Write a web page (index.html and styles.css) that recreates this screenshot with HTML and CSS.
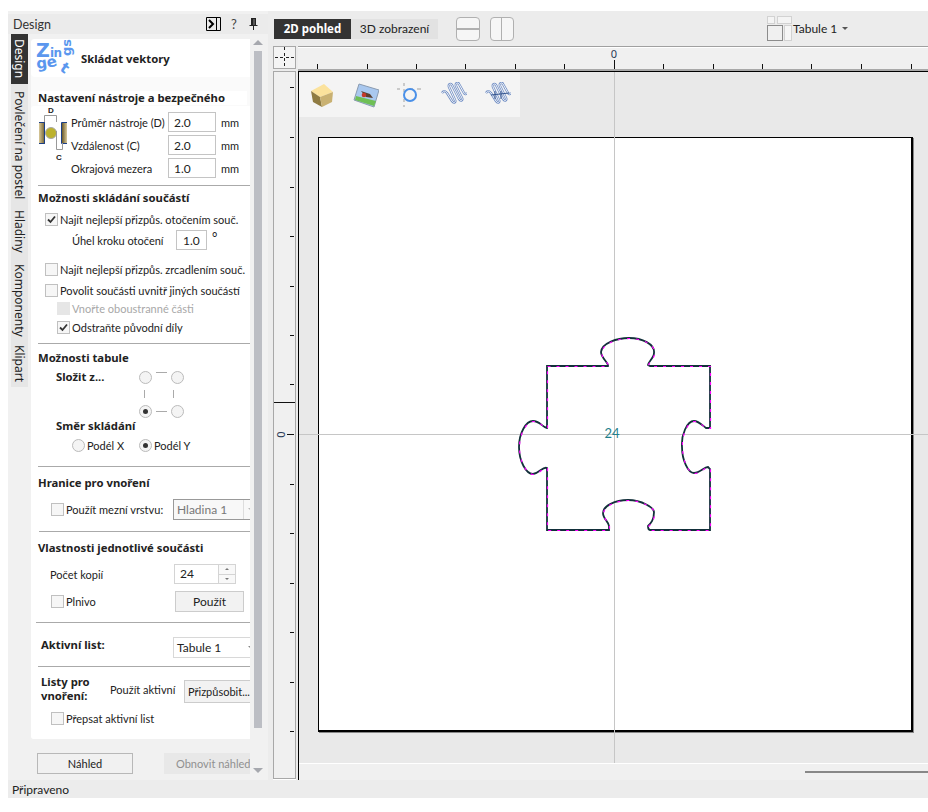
FILE: index.html
```html
<!DOCTYPE html>
<html lang="cs">
<head>
  <meta charset="UTF-8" />
  <title>Skládat vektory</title>
  <link rel="stylesheet" href="styles.css">
</head>
<body>
  <div class="app">
    <div class="main">
      <!-- left design panel -->
      <aside class="panel">
        <div class="panel-title">
          <span class="panel-name">Design</span>
          <span class="pt-dock"><svg width="15" height="14" viewBox="0 0 15 14"><path d="M.5.5h14v13H.5zM10.500 1v12" fill="none" stroke="#000"/><path d="M3 3l4 4-4 4" fill="none" stroke="#000" stroke-width="2"/></svg></span>
          <span class="pt-help">?</span>
          <span class="pt-pin"><svg width="9" height="14" viewBox="0 0 9 14"><path d="M2 1h5v7h1.500v1h-8v-1H2zM4 9h1v4H4z" fill="#222"/><path d="M5 2v6" stroke="#888"/></svg></span>
        </div>
        <div class="panel-body">
          <nav class="tabs">
            <span class="tab tab-active">Design</span>
            <span class="tab tab-bed">Povlečení na postel</span>
            <span class="tab tab-layers">Hladiny</span>
            <span class="tab tab-comp">Komponenty</span>
            <span class="tab tab-clip">Klipart</span>
          </nav>
          <div class="form-col">
            <div class="form-scroll">
              <div class="head-card">
                <svg class="logo" width="36" height="38" viewBox="0 0 36 38">
                  <g fill="#5b97ee" font-family="'DejaVu Sans', sans-serif" font-weight="700">
                    <text x="0" y="18" font-size="19">Z</text>
                    <text x="14" y="18" font-size="12">i</text>
                    <text x="17.500" y="18" font-size="12">n</text>
                    <text transform="translate(35 17) rotate(-90)" font-size="13">gs</text>
                    <text transform="translate(1 30) rotate(-8)" font-size="15">g</text>
                    <text transform="translate(12 29) rotate(-15)" font-size="15">e</text>
                    <text transform="translate(23 31) rotate(35)" font-size="15">t</text>
                  </g>
                </svg>
                <span class="head-title">Skládat vektory</span>
              </div>

              <section class="sec-tool">
                <h3 class="sec-h sec-h-white">Nastavení nástroje a bezpečného</h3>
                <div class="tool-body">
                  <svg class="tool-pic" width="30" height="44" viewBox="0 0 30 44">
                    <defs>
                      <linearGradient id="woodL" x1="0" x2="1"><stop offset="0" stop-color="#d9c99a"/><stop offset="1" stop-color="#6b5a2a"/></linearGradient>
                      <linearGradient id="woodR" x1="0" x2="1"><stop offset="0" stop-color="#6b5a2a"/><stop offset="1" stop-color="#d9c99a"/></linearGradient>
                    </defs>
                    <rect x="0" y="10" width="6" height="22" fill="url(#woodL)"/>
                    <path d="M0 10.500h5.500v21H0" stroke="#1c3f86" fill="none"/>
                    <rect x="23" y="10" width="5" height="22" fill="url(#woodR)"/>
                    <path d="M28 10.500h-5.500v21H28" stroke="#1c3f86" fill="none"/>
                    <circle cx="12" cy="21" r="5.500" fill="#bcb22e" stroke="#a8a8a8"/>
                    <path d="M5.500 10V3.500h12V10M17.500 19v18.500h6V31" fill="none" stroke="#999"/>
                    <text x="12" y="1" class="tool-letter" text-anchor="middle">D</text>
                    <text x="20" y="48" class="tool-letter" text-anchor="middle">C</text>
                  </svg>
                  <div class="tool-fields">
                    <div class="field"><label class="field-l">Průměr nástroje (D)</label><input class="num" value="2.0" readonly><span class="unit">mm</span></div>
                    <div class="field"><label class="field-l">Vzdálenost (C)</label><input class="num" value="2.0" readonly><span class="unit">mm</span></div>
                    <div class="field"><label class="field-l">Okrajová mezera</label><input class="num" value="1.0" readonly><span class="unit">mm</span></div>
                  </div>
                </div>
              </section>

              <section class="sec sec-nest">
                <h3 class="sec-h">Možnosti skládání součástí</h3>
                <div class="row r-best"><span class="check on"><svg width="11" height="11" viewBox="0 0 11 11"><path d="M2 5.500l2.500 2.500L9 2.500" fill="none" stroke="#333" stroke-width="1.800"/></svg></span>Najít nejlepší přizpůs. otočením souč.</div>
                <div class="row r-angle"><span class="angle-l">Úhel kroku otočení</span><input class="num num-angle" value="1.0" readonly><span class="deg">°</span></div>
                <div class="row r-mirror"><span class="check"></span>Najít nejlepší přizpůs. zrcadlením souč.</div>
                <div class="row r-inside"><span class="check"></span>Povolit součásti uvnitř jiných součástí</div>
                <div class="row r-sub r-off"><span class="check check-off"></span>Vnořte oboustranné části</div>
                <div class="row r-sub r-orig"><span class="check on"><svg width="11" height="11" viewBox="0 0 11 11"><path d="M2 5.500l2.500 2.500L9 2.500" fill="none" stroke="#333" stroke-width="1.800"/></svg></span>Odstraňte původní díly</div>
              </section>

              <section class="sec sec-sheet">
                <h3 class="sec-h">Možnosti tabule</h3>
                <div class="corner-row">
                  <span class="sub-h">Složit z...</span>
                  <div class="corners">
                    <span class="radio"></span><span class="dash-h dash-top"></span><span class="radio"></span>
                    <span class="dash-v"></span><span></span><span class="dash-v dash-v2"></span>
                    <span class="radio on"></span><span class="dash-h"></span><span class="radio"></span>
                  </div>
                </div>
                <div class="sub-h sub-dir">Směr skládání</div>
                <div class="dir-row">
                  <span class="radio"></span><span class="dir-x">Podél X</span>
                  <span class="radio on"></span><span>Podél Y</span>
                </div>
              </section>

              <section class="sec sec-limit">
                <h3 class="sec-h">Hranice pro vnoření</h3>
                <div class="limit-row">
                  <span class="check"></span><span class="limit-l">Použít mezní vrstvu:</span>
                  <div class="combo combo-off">Hladina 1<span class="combo-btn combo-btn-off"></span></div>
                </div>
              </section>

              <section class="sec sec-part">
                <h3 class="sec-h">Vlastnosti jednotlivé součásti</h3>
                <div class="part-row">
                  <span class="part-l">Počet kopií</span>
                  <div class="spin"><span class="spin-val">24</span><span class="spin-btns"><i class="up"></i><i class="down"></i></span></div>
                </div>
                <div class="part-row part-row2">
                  <span class="check"></span><span class="fill-l">Plnivo</span>
                  <span class="btn btn-use">Použít</span>
                </div>
              </section>

              <section class="sec sec-active">
                <span class="active-l">Aktivní list:</span>
                <div class="combo">Tabule 1<span class="combo-btn"></span></div>
              </section>

              <section class="sec-sheets">
                <div class="sheets-row">
                  <span class="sheets-l">Listy pro<br>vnoření:</span>
                  <span class="sheets-use">Použít aktivní</span>
                  <span class="btn btn-fit">Přizpůsobit...</span>
                </div>
                <div class="row r-over"><span class="check"></span>Přepsat aktivní list</div>
              </section>
            </div>
            <div class="form-btns">
              <span class="btn btn-prev">Náhled</span>
              <span class="btn btn-refresh">Obnovit náhled</span>
            </div>
          </div>
          <div class="scroll">
            <i class="arr arr-up"></i>
            <i class="thumb"></i>
            <i class="arr arr-down"></i>
          </div>
        </div>
      </aside>

      <!-- right view -->
      <div class="view">
        <div class="view-bar">
          <div class="mode-tabs">
            <span class="mode mode-on">2D pohled</span>
            <span class="mode">3D zobrazení</span>
          </div>
          <span class="split split-h"></span>
          <span class="split split-v"></span>
          <div class="sheet-pick">
            <svg width="25" height="25" viewBox="0 0 25 25">
              <rect x=".5" y=".5" width="7" height="7" fill="#f4f4f4" stroke="#d2d2d2"/>
              <rect x="10.500" y=".5" width="14" height="7" fill="#f4f4f4" stroke="#d2d2d2"/>
              <rect x=".5" y="9.500" width="15" height="15" fill="#f0f0f0" stroke="#8c8c8c"/>
              <rect x="17.500" y="9.500" width="7" height="15" fill="#f6f6f6" stroke="#d2d2d2"/>
            </svg>
            <span class="pick-name">Tabule 1</span>
            <i class="pick-arrow"></i>
          </div>
        </div>
        <div class="view-grid">
          <div class="corner-box">
            <svg width="21" height="20" viewBox="0 0 21 20"><path d="M10.500 0v3M10.500 6v3M10.500 11v3M10.500 16v3M1 10.500h3M6 10.500h3M12 10.500h3M17 10.500h3" stroke="#222" fill="none"/></svg>
          </div>
          <div class="ruler-top">
            <svg width="630" height="22" viewBox="0 0 630 22" shape-rendering="crispEdges">
              <path d="M19.500 17v5M69.500 17v5M118.500 17v5M167.500 17v5M217.500 17v5M266.500 17v5M316.500 13v9M365.500 17v5M415.500 17v5M464.500 17v5M513.500 17v5M563.500 17v5M613.500 17v5" stroke="#111" fill="none"/>
              <text x="316" y="11" text-anchor="middle" class="ruler-num" shape-rendering="auto">0</text>
            </svg>
          </div>
          <div class="ruler-left">
            <svg width="21" height="706" viewBox="0 0 21 706" shape-rendering="crispEdges">
              <path d="M16 15.500h4M16 65.500h4M16 115.500h4M16 164.500h4M16 214.500h4M16 263.500h4M16 312.500h4M0 330.500h21M13 362.500h7M16 412.500h4M16 461.500h4M16 511.500h4M16 560.500h4M16 610.500h4M16 659.500h4" stroke="#111" fill="none"/>
              <text transform="translate(11 362.500) rotate(-90)" text-anchor="middle" class="ruler-num" shape-rendering="auto">0</text>
            </svg>
          </div>
          <div class="canvas-wrap">
            <div class="canvas">
              <div class="tool-strip">
                <svg class="tico" width="26" height="26" viewBox="0 0 26 26">
                  <polygon points="2,9 15,2 24,10 11,15" fill="#fbe29c"/>
                  <polygon points="2,9 11,15 13,25 4,20" fill="#8f7b42"/>
                  <polygon points="11,15 24,10 23,20 13,25" fill="#c9b172"/>
                </svg>
                <svg class="tico" width="26" height="26" viewBox="0 0 26 26">
                  <polygon points="6,2 26,8 21,25 1,18" fill="#a9c8ef" stroke="#8a9bb0"/>
                  <polygon points="3,14 23,19 21,24 2,18" fill="#6fbf55"/>
                  <path d="M8 9l9 3 3 4-7-1z" fill="#5b4030"/>
                  <circle cx="11" cy="13" r="2.300" fill="#c4382a"/>
                </svg>
                <svg class="tico" width="26" height="26" viewBox="0 0 26 26">
                  <path d="M7 1v3M7 7v3M7 17v3M7 23v2M0 7h3M13 7h3M20 7h4" stroke="#a0a0a0" fill="none"/>
                  <circle cx="13" cy="13" r="6" fill="none" stroke="#4a90e8" stroke-width="2"/>
                </svg>
                <svg class="tico" width="26" height="26" viewBox="0 0 26 26" fill="none">
                  <path d="M1 11c2-3 3-2 5 0l5 8c2 3 4 1 3-1L8 5c-1-3 2-4 3-2l7 14c2 3 4 1 3-1L15 4c-1-3 2-4 3-2l5 9c1 2 2 1 3 0" stroke="#6f8dc4" stroke-width="2.400"/>
                  <path d="M1 11c2-3 3-2 5 0l5 8c2 3 4 1 3-1L8 5c-1-3 2-4 3-2l7 14c2 3 4 1 3-1L15 4c-1-3 2-4 3-2l5 9c1 2 2 1 3 0" stroke="#f4f6fa" stroke-width="1"/>
                </svg>
                <svg class="tico" width="26" height="26" viewBox="0 0 26 26" fill="none">
                  <path d="M1 11c2-3 3-2 5 0l5 8c2 3 4 1 3-1L8 5c-1-3 2-4 3-2l7 14c2 3 4 1 3-1L15 4c-1-3 2-4 3-2l5 9c1 2 2 1 3 0" stroke="#6f8dc4" stroke-width="2.400"/>
                  <path d="M1 11c2-3 3-2 5 0l5 8c2 3 4 1 3-1L8 5c-1-3 2-4 3-2l7 14c2 3 4 1 3-1L15 4c-1-3 2-4 3-2l5 9c1 2 2 1 3 0" stroke="#f4f6fa" stroke-width="1"/>
                  <path d="M6 13l18-2M10 9v8M16 9v8" stroke="#34558f"/>
                </svg>
              </div>
              <div class="sheet">
                <svg class="puzzle" width="592" height="592" viewBox="319 138 592 592">
                  <g fill="none">
                    <path d="M547 366H608C609 363 601 358 601 352C602 343 617 338 629 338C642 338 655 344 654 353C654 358 648 362 648 365L650 366H710V428H706C703 426 699 421 694 421C687 421 681 435 682 447C682 460 688 473 694 473C700 473 704 467 708 467L710 469V530H650C648 530 648 527 648 526C651 523 654 520 654 512C654 508 642 500 628 500C615 500 603 506 603 513C603 519 609 522 609 526V530H547V468C543 466 540 473 533 474C526 474 519 461 519 447C519 433 526 421 533 421C540 421 542 427 547 428Z" stroke="#12303a" stroke-width="1.800"/>
                    <path d="M547 366H608C609 363 601 358 601 352C602 343 617 338 629 338C642 338 655 344 654 353C654 358 648 362 648 365L650 366H710V428H706C703 426 699 421 694 421C687 421 681 435 682 447C682 460 688 473 694 473C700 473 704 467 708 467L710 469V530H650C648 530 648 527 648 526C651 523 654 520 654 512C654 508 642 500 628 500C615 500 603 506 603 513C603 519 609 522 609 526V530H547V468C543 466 540 473 533 474C526 474 519 461 519 447C519 433 526 421 533 421C540 421 542 427 547 428Z" stroke="#ff00ff" stroke-dasharray="3 6" stroke-width="1.200" transform="translate(.5 .5)"/>
                  </g>
                  <text x="612" y="438" text-anchor="middle" class="part-count">24</text>
                </svg>
              </div>
              <i class="guide guide-v"></i>
              <i class="guide guide-h"></i>
            </div>
            <div class="h-scroll"><i class="h-thumb"></i></div>
          </div>
        </div>
      </div>
    </div>
    <div class="status">Připraveno</div>
  </div>
</body>
</html>
```

FILE: styles.css
```css
* {
  margin: 0;
  padding: 0;
  box-sizing: border-box;
}

body {
  background: #fff;
  font-family: Lato, "Noto Sans", sans-serif;
  font-size: 12px;
  color: #222;
  overflow: hidden;
}

.app {
  margin: 11px 0 0 8px;
  width: 920px;
  height: 787px;
  display: flex;
  flex-direction: column;
  background: #ececec;
}

.main {
  flex: 1;
  display: flex;
  min-height: 0;
}

/* panel */
.panel {
  width: 260px;
  display: flex;
  flex-direction: column;
  background: #f1f1f1;
}

.panel-title {
  height: 20px;
  margin-top: 3px;
  display: flex;
  align-items: center;
  background: #ebebeb;
}

.panel-name {
  margin-left: 5px;
  font-size: 12.5px;
  color: #333;
  flex: 1;
}

.pt-dock, .pt-help, .pt-pin {
  display: flex;
  align-items: center;
}

.pt-dock { margin-right: 10px; }
.pt-help { margin-right: 8px; width: 10px; font-size: 13px; color: #444; }
.pt-pin { margin-right: 10px; }

.panel-body {
  flex: 1;
  display: flex;
  min-height: 0;
}

.tabs {
  width: 17px;
  height: 353px;
  margin-left: 3px;
  background: #e6e6e6;
  display: flex;
  flex-direction: column;
}

.tab {
  writing-mode: vertical-rl;
  width: 17px;
  font-family: "Noto Sans", sans-serif;
  font-size: 12px;
  line-height: 17px;
  color: #222;
  text-align: center;
}

.tab-active {
  height: 50px;
  background: #333;
  color: #fff;
}

.tab-bed { height: 113px; margin-top: 5px; }
.tab-layers { height: 42px; margin-top: 8px; }
.tab-comp { height: 70px; margin-top: 12px; }
.tab-clip { height: 37px; margin-top: 11px; }

.form-col {
  width: 222px;
  margin-left: 3px;
  display: flex;
  flex-direction: column;
  font-size: 11px;
}

.form-scroll {
  width: 219px;
  height: 700px;
  margin-top: 5px;
  background: #fafafa;
  overflow: hidden;
  border-radius: 3px 0 0 3px;
}

.head-card {
  height: 38px;
  background: #fff;
  display: flex;
  align-items: center;
  border-radius: 4px 0 0 4px;
}

.logo { margin-left: 5px; flex: none; overflow: visible; }

.head-title, .sec-h, .sub-h, .active-l, .sheets-l {
  font-family: "Noto Sans", sans-serif;
  font-weight: 700;
  font-size: 11.3px;
  color: #222;
}

.head-title {
  margin-left: 9px;
}

.sec {
  position: relative;
  background: #fff;
}

/* separator between the groups, inset from the left */
.sec::after, .tool-body::after {
  content: "";
  position: absolute;
  left: 7px;
  right: 0;
  bottom: 0;
  height: 1px;
  background: #aaa;
}

.sec-h {
  height: 14px;
  line-height: 14px;
  margin-left: 7px;
  white-space: nowrap;
}

/* tool section */
.sec-tool {
  margin-top: 14px;
}

.sec-h-white {
  background: #fff;
  width: 209px;
  margin-bottom: 1px;
}

.tool-body {
  position: relative;
  background: #fff;
  display: flex;
  padding: 6px 0 8px 8px;
  border-radius: 3px 0 0 0;
}

.tool-pic {
  overflow: visible;
  flex: none;
}

.tool-letter {
  font-family: "Liberation Sans", sans-serif;
  font-size: 8px;
  font-weight: 700;
  fill: #222;
}

.tool-fields {
  margin-left: 3px;
  display: flex;
  flex-direction: column;
  gap: 3px;
}

.field {
  height: 20px;
  display: flex;
  align-items: center;
  white-space: nowrap;
}

.field-l {
  width: 97px;
  margin-left: -1px;
  flex: none;
}

.num {
  width: 48px;
  height: 20px;
  border: 1px solid #c4c4c4;
  padding-left: 5px;
  font: inherit;
  font-size: 12px;
  color: #222;
  background: #fff;
  outline: none;
}

.unit {
  margin-left: 5px;
}

/* nesting options */
.sec-nest {
  height: 158px;
  padding-top: 5px;
}

.row {
  display: flex;
  align-items: center;
  white-space: nowrap;
}

.check {
  width: 13px;
  height: 13px;
  margin-right: 2px;
  border: 1px solid #c0c0c0;
  background: #f6f6f6;
  display: flex;
  align-items: center;
  justify-content: center;
  flex: none;
}

.check-off {
  background: #e6e6e6;
  border-color: #e6e6e6;
}

.r-best { height: 20px; margin: 4px 0 0 14px; }
.r-angle { height: 20px; margin: 1px 0 0 41px; }
.angle-l { width: 104px; }
.num-angle { width: 31px; padding-left: 6px; }
.deg { margin: -6px 0 0 5px; font-size: 13px; }
.r-mirror { height: 20px; margin: 9px 0 0 14px; }
.r-inside { height: 20px; margin: 1px 0 0 14px; }
.r-sub { height: 17px; margin-left: 26px; }
.r-off { color: #a8a8a8; }
.r-orig { height: 19px; margin-top: 1px; }

/* sheet options */
.sec-sheet {
  height: 123px;
  padding-top: 7px;
}

.sub-h {
  line-height: 14px;
}

.corner-row {
  display: flex;
  margin: 5px 0 0 25px;
  height: 48px;
}

.corner-row .sub-h { width: 83px; }

.corners {
  display: grid;
  grid-template-columns: 13px 19px 13px;
  grid-template-rows: 14px 20px 14px;
  justify-items: center;
  align-items: center;
}

.radio {
  width: 13px;
  height: 13px;
  border-radius: 50%;
  border: 1px solid #bbb;
  background: #f4f4f4;
  display: inline-block;
  position: relative;
  flex: none;
}

.radio.on::after {
  content: "";
  position: absolute;
  left: 3px;
  top: 3px;
  width: 5px;
  height: 5px;
  border-radius: 50%;
  background: #333;
}

.dash-h {
  width: 11px;
  height: 1px;
  background: #aaa;
}

.dash-top { margin-top: -9px; }

.dash-v {
  width: 1px;
  height: 8px;
  background: #aaa;
  margin-left: -2px;
}

.dash-v2 { margin-left: -8px; }

.sub-dir { margin: 1px 0 0 25px; }

.dir-row {
  display: flex;
  align-items: center;
  height: 18px;
  margin: 3px 0 0 41px;
}

.dir-row .radio { margin-right: 2px; }
.dir-x { width: 52px; }

/* limit */
.sec-limit {
  height: 65px;
  padding-top: 9px;
}

.sec-limit::after { left: 8px; }

.limit-row {
  display: flex;
  align-items: center;
  height: 21px;
  margin: 9px 0 0 20px;
  white-space: nowrap;
}

.limit-l { width: 107px; flex: none; }

.combo {
  position: relative;
  width: 90px;
  height: 21px;
  flex: none;
  border: 1px solid #d8d8d8;
  border-right: 0;
  background: #fff;
  line-height: 19px;
  padding-left: 3px;
  font-size: 12px;
}

.combo-off {
  border: 1px solid #999;
  border-right: 0;
  color: #777;
  background: #f8f8f8;
}

.combo-off::after {
  content: "";
  position: absolute;
  left: 69px;
  top: 0;
  bottom: 0;
  width: 1px;
  background: #ddd;
}

.combo-btn {
  position: absolute;
  left: 74px;
  top: 8px;
  border: 3px solid transparent;
  border-top-color: #888;
}

.combo-btn-off { border-top-color: #bbb; }

/* part */
.sec-part {
  height: 91px;
  padding-top: 9px;
}

.sec-part::after { left: 5px; }

.part-row {
  display: flex;
  align-items: center;
  height: 20px;
  margin: 9px 0 0 19px;
}

.part-row2 { height: 21px; margin: 7px 0 0 20px; }
.part-l { width: 124px; flex: none; }

.spin {
  width: 62px;
  height: 20px;
  border: 1px solid #d4d4d4;
  display: flex;
  background: #fff;
  font-size: 12px;
}

.spin-val {
  flex: 1;
  padding-left: 5px;
  line-height: 18px;
}

.spin-btns {
  width: 17px;
  border-left: 1px solid #d4d4d4;
  display: flex;
  flex-direction: column;
  background: #f8f8f8;
}

.spin-btns i {
  flex: 1;
  position: relative;
}

.spin-btns .up { border-bottom: 1px solid #d4d4d4; }

.spin-btns i::after {
  content: "";
  position: absolute;
  left: 6px;
  top: 3px;
  border: 2px solid transparent;
}

.spin-btns .up::after { border-bottom-color: #777; top: 1px; }
.spin-btns .down::after { border-top-color: #777; }

.fill-l { width: 109px; flex: none; }

.btn {
  display: flex;
  align-items: center;
  justify-content: center;
  flex: none;
  background: #f2f2f2;
  border: 1px solid #ccc;
  white-space: nowrap;
}

.btn-use { width: 69px; height: 21px; font-size: 12px; }

/* active sheet */
.sec-active {
  height: 44px;
  display: flex;
  padding: 14px 0 0 10px;
}

.active-l {
  width: 132px;
  flex: none;
  line-height: 15px;
}

/* sheets */
.sec-sheets {
  height: 72px;
  background: #fff;
  padding-top: 13px;
}

.sheets-row {
  display: flex;
  height: 23px;
  margin-left: 10px;
}

.sheets-l {
  width: 69px;
  flex: none;
  line-height: 14px;
  margin-top: -5px;
}

.sheets-use {
  width: 74px;
  flex: none;
  margin-top: 3px;
  white-space: nowrap;
}

.btn-fit {
  width: 70px;
  height: 23px;
  justify-content: flex-start;
  padding-left: 3px;
  overflow: hidden;
  font-size: 11px;
}

.r-over { height: 18px; margin: 6px 0 0 20px; }

/* bottom buttons */
.form-btns {
  display: flex;
  margin-top: 14px;
  overflow: hidden;
  width: 219px;
}

.btn-prev {
  width: 96px;
  height: 21px;
  margin-left: 6px;
  background: #f1f1f1;
  border-color: #b8b8b8;
}

.btn-refresh {
  width: 90px;
  height: 21px;
  margin-left: 31px;
  justify-content: flex-start;
  padding-left: 11px;
  background: #e8e8e8;
  border-color: #e8e8e8;
  color: #909090;
}

/* scrollbar */
.scroll {
  width: 9px;
  margin-left: 1px;
  position: relative;
}

.thumb {
  position: absolute;
  top: 17px;
  left: 0;
  width: 8px;
  height: 677px;
  background: #bcbec4;
}

.arr {
  position: absolute;
  left: -1px;
  border: 5px solid transparent;
}

.arr-up { top: 1px; border-bottom-color: #a6a8ae; }
.arr-down { top: 734px; border-top-color: #a6a8ae; }

/* view */
.view {
  flex: 1;
  min-width: 0;
  display: flex;
  flex-direction: column;
  padding-left: 5px;
}

.view-bar {
  height: 35px;
  display: flex;
  align-items: center;
}

.mode-tabs {
  display: flex;
  margin-left: 1px;
}

.mode {
  height: 20px;
  line-height: 20px;
  width: 87px;
  text-align: center;
  background: #e2e2e2;
  color: #222;
}

.mode-on {
  width: 77px;
  background: #333;
  color: #fff;
  font-family: "Noto Sans", sans-serif;
  font-weight: 700;
  font-size: 11.5px;
}

.split {
  width: 24px;
  height: 24px;
  border: 1px solid #b0b0b0;
  border-radius: 4px;
  background: #f6f6f6;
}

.split-h {
  margin-left: 18px;
  background: linear-gradient(#f6f6f6 0 10px, #b0b0b0 10px 12px, #f6f6f6 12px);
}

.split-v {
  margin-left: 10px;
  background: linear-gradient(to right, #f6f6f6 0 10px, #b0b0b0 10px 11px, #f6f6f6 11px);
}

.sheet-pick {
  display: flex;
  align-items: center;
  margin-left: 253px;
}

.pick-name {
  margin-left: 1px;
}

.pick-arrow {
  margin: 2px 0 0 5px;
  border: 3px solid transparent;
  border-top-color: #555;
}

.view-grid {
  display: grid;
  grid-template-columns: 25px 630px;
  grid-template-rows: 25px 709px;
}

.corner-box {
  width: 23px;
  height: 23px;
  border: 1px solid #a8a8a8;
  background: #f4f4f4;
}

.ruler-top {
  border-top: 1px solid #a0a0a0;
  background: #f0f0f0;
  height: 25px;
  border-bottom: 2px solid #a8a8a8;
  box-shadow: inset 0 1px 0 #fff;
}

.ruler-left {
  width: 23px;
  height: 708px;
  border: 1px solid #a8a8a8;
  background: #f0f0f0;
  box-shadow: 0 1px 0 #fff;
  overflow: hidden;
}

.ruler-num {
  font-family: "Noto Sans", sans-serif;
  font-size: 11px;
  fill: #2a3a55;
}

.canvas-wrap {
  display: flex;
  flex-direction: column;
  min-height: 0;
  border-left: 1px solid #000;
}

.canvas {
  flex: 1;
  position: relative;
  background: #e9e9e9;
  border-top: 1px solid #000;
  overflow: hidden;
  min-height: 0;
}

.tool-strip {
  width: 221px;
  height: 44px;
  margin-top: 1px;
  background: #f4f4f4;
  display: flex;
  align-items: center;
  gap: 18px;
  padding-left: 10px;
}

.sheet {
  position: relative;
  width: 595px;
  height: 595px;
  margin: 20px 0 0 19px;
  background: #fff;
  border: 1px solid #000;
  border-right-width: 2px;
  border-bottom-width: 2px;
  box-shadow: 1px 1px 0 #888;
}

/* the part and its label lie above the guide lines */
.puzzle {
  display: block;
  position: relative;
  z-index: 1;
}

.part-count {
  font-family: Lato, sans-serif;
  font-size: 13px;
  fill: #1f7f8c;
}

.guide {
  position: absolute;
  background: #c6c6c6;
}

.guide-v {
  left: 315px;
  top: 0;
  bottom: 0;
  width: 1px;
}

.guide-h {
  left: 0;
  right: 0;
  top: 362px;
  height: 1px;
}

.h-scroll {
  height: 17px;
  flex: none;
  background: #f0f0f0;
  border-top: 1px solid #fff;
  position: relative;
}

.h-thumb {
  position: absolute;
  left: 506px;
  right: 0;
  top: 7px;
  height: 2px;
  background: #888;
}

.status {
  height: 18px;
  line-height: 19px;
  padding-left: 4px;
  color: #222;
  background: #ececec;
}
```
